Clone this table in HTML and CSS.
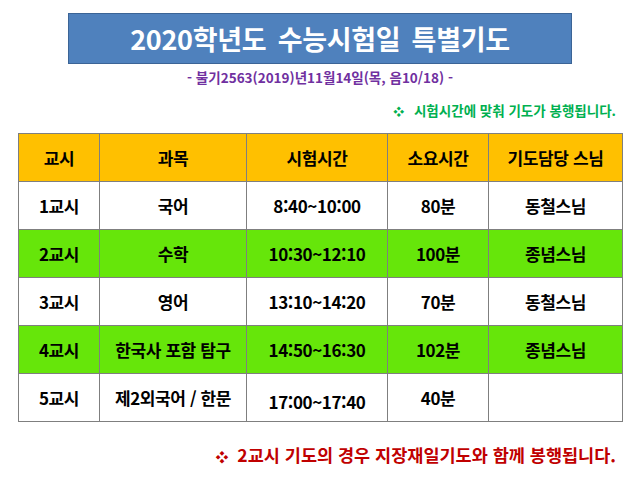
FILE: index.html
```html
<!DOCTYPE html>
<html lang="ko">
<head>
<meta charset="utf-8">
<link rel="stylesheet" href="styles.css">
</head>
<body>
<div class="page">
  <div class="title-wrap">
    <h1 class="title">2020학년도 수능시험일 특별기도</h1>
  </div>
  <p class="subtitle">- 불기2563(2019)년11월14일(목, 음10/18) -</p>
  <p class="note-green"><span class="bullet">❖</span> 시험시간에 맞춰 기도가 봉행됩니다.</p>
  <table class="schedule">
    <colgroup>
      <col class="c1"><col class="c2"><col class="c3"><col class="c4"><col class="c5">
    </colgroup>
    <thead>
      <tr class="head"><th>교시</th><th>과목</th><th>시험시간</th><th>소요시간</th><th>기도담당 스님</th></tr>
    </thead>
    <tbody>
      <tr><td>1교시</td><td>국어</td><td>8:40~10:00</td><td>80분</td><td>동철스님</td></tr>
      <tr class="green"><td>2교시</td><td>수학</td><td>10:30~12:10</td><td>100분</td><td>종념스님</td></tr>
      <tr><td>3교시</td><td>영어</td><td>13:10~14:20</td><td>70분</td><td>동철스님</td></tr>
      <tr class="green"><td>4교시</td><td>한국사 포함 탐구</td><td>14:50~16:30</td><td>102분</td><td>종념스님</td></tr>
      <tr><td>5교시</td><td>제2외국어 / 한문</td><td class="low">17:00~17:40</td><td>40분</td><td></td></tr>
    </tbody>
  </table>
  <p class="note-red"><span class="bullet">❖</span> 2교시 기도의 경우 지장재일기도와 함께 봉행됩니다.</p>
</div>
</body>
</html>
```
FILE: styles.css
```css
html, body {
  margin: 0;
  padding: 0;
  background: #ffffff;
}
body {
  font-family: "Noto Sans CJK KR", "Liberation Sans", sans-serif;
  font-weight: 700;
  color: #111;
}
.page {
  width: 640px;
  height: 480px;
  padding-top: 13px;
  box-sizing: border-box;
}
.title-wrap {
  display: flex;
  justify-content: center;
}
.title {
  margin: 0;
  width: 504px;
  height: 51px;
  box-sizing: border-box;
  background: #4f81bd;
  border: 1px solid #3b6496;
  color: #ffffff;
  font-size: 27px;
  font-weight: 700;
  line-height: 49px;
  text-align: center;
  word-spacing: 4px;
  letter-spacing: -0.3px;
}
.subtitle {
  margin: 4px 0 0;
  text-align: center;
  color: #7030a0;
  font-size: 13.5px;
  line-height: 18px;
  letter-spacing: 0;
}
.note-green {
  margin: 15px 24px 0 0;
  text-align: right;
  color: #00b050;
  font-size: 13.5px;
  line-height: 18px;
}
.note-green .bullet {
  margin-right: 6px;
  font-size: 11px;
}
.schedule {
  margin: 13px 0 0 18px;
  width: 604px;
  border-collapse: collapse;
  table-layout: fixed;
}
.c1 { width: 81px; }
.c2 { width: 147px; }
.c3 { width: 141px; }
.c4 { width: 101px; }
.c5 { width: 134px; }
.schedule th, .schedule td {
  border: 1px solid #7f7f7f;
  height: 47px;
  padding: 0;
  text-align: center;
  vertical-align: middle;
  font-size: 17px;
  font-weight: 700;
  color: #000;
  letter-spacing: -0.4px;
}
.head th {
  background: #ffc000;
}
.green td {
  background: #66e60a;
}
.schedule td.low {
  padding-top: 8px;
  height: 39px;
}
.note-red {
  margin: 23px 24px 0 0;
  text-align: right;
  color: #c00000;
  font-size: 17.5px;
  line-height: 20px;
  letter-spacing: 0;
}
.note-red .bullet {
  margin-right: 4px;
  font-size: 13px;
}
```
